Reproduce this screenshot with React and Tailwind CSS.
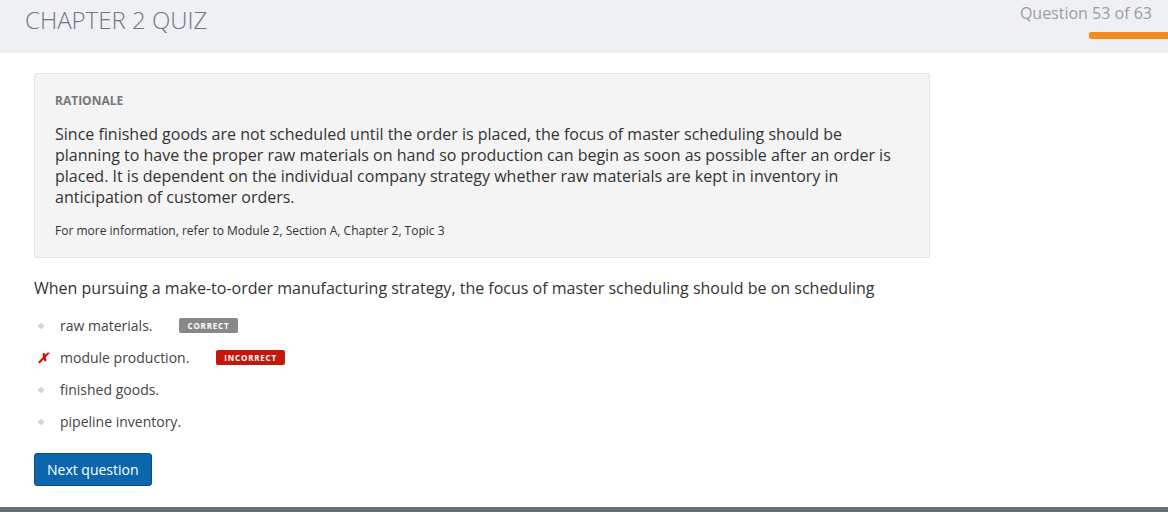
const options = [
  { text: "raw materials.", mark: "dot", badge: "correct" },
  { text: "module production.", mark: "cross", badge: "incorrect" },
  { text: "finished goods.", mark: "dot" },
  { text: "pipeline inventory.", mark: "dot" }
];

const Diamond = () => (
  <svg width="8" height="8" viewBox="0 0 8 8" className="text-gray-300">
    <path d="M4 0.5 L7.5 4 L4 7.5 L0.5 4 Z" fill="currentColor" />
  </svg>
);

const App = () => {
  return (
    <div className="flex h-[512px] flex-col bg-white font-['Open_Sans',sans-serif] text-[#333]">
      <header className="flex h-[53px] shrink-0 items-start justify-between bg-[#eff0f4] pl-[25px]">
        <h1 className="pt-[4px] text-[24px] font-light leading-[32px] text-[#6f7680]">CHAPTER 2 QUIZ</h1>
        <div className="flex flex-col items-end pt-[2px]">
          <p className="pr-[16px] text-[16px] leading-[22px] text-[#9a9ea4]">Question 53 of 63</p>
          <div className="mt-[8px] h-[7px] w-[79px] rounded-l-[2px] bg-[#f28c1e]" />
        </div>
      </header>

      <main className="flex-1 px-[34px] pt-[20px]">
        <section className="w-[896px] rounded-[3px] border border-[#e3e3e3] bg-[#f4f4f4] px-[20px] pt-[18px] pb-[18px]">
          <p className="text-[12px] font-bold leading-[17px] text-[#777]">RATIONALE</p>
          <p className="mt-[15px] text-[16px] leading-[21px] text-[#333]">
            Since finished goods are not scheduled until the order is placed, the focus of master scheduling should be planning to have the proper raw materials on hand so production can begin as soon as possible after an order is placed. It is dependent on the individual company strategy whether raw materials are kept in inventory in anticipation of customer orders.
          </p>
          <p className="mt-[14px] text-[12px] leading-[17px] text-[#333]">
            For more information, refer to Module 2, Section A, Chapter 2, Topic 3
          </p>
        </section>

        <p className="mt-[19px] text-[16px] leading-[22px] text-[#333]">
          When pursuing a make-to-order manufacturing strategy, the focus of master scheduling should be on scheduling
        </p>

        <ul className="mt-[17px] flex flex-col gap-[12px]">
          {options.map((option) => (
            <li key={option.text} className="flex h-[20px] items-center">
              <span className="flex w-[26px] items-center justify-start pl-[3px]">
                {option.mark === "cross" ? (
                  <span className="text-[14px] font-bold italic leading-none text-[#e00000]">✗</span>
                ) : (
                  <Diamond />
                )}
              </span>
              <span className="text-[14px] leading-[20px] text-[#444]">{option.text}</span>
              {option.badge === "correct" ? (
                <span className="ml-[26px] -translate-y-[1px] rounded-[2px] bg-[#888] px-[9px] text-[8px] font-bold leading-[15px] tracking-[0.1em] text-white">CORRECT</span>
              ) : null}
              {option.badge === "incorrect" ? (
                <span className="ml-[27px] -translate-y-[1px] rounded-[2px] bg-[#c4170c] px-[8px] text-[8px] font-bold leading-[15px] tracking-[0.1em] text-white">INCORRECT</span>
              ) : null}
            </li>
          ))}
        </ul>

        <button className="mt-[21px] h-[33px] rounded-[3px] border border-[#0a4f85] bg-[#0b66ad] px-[12px] text-[14px] text-white">
          Next question
        </button>
      </main>

      <div className="h-[5px] shrink-0 bg-[#68717a]" />
    </div>
  );
};

export default App;
